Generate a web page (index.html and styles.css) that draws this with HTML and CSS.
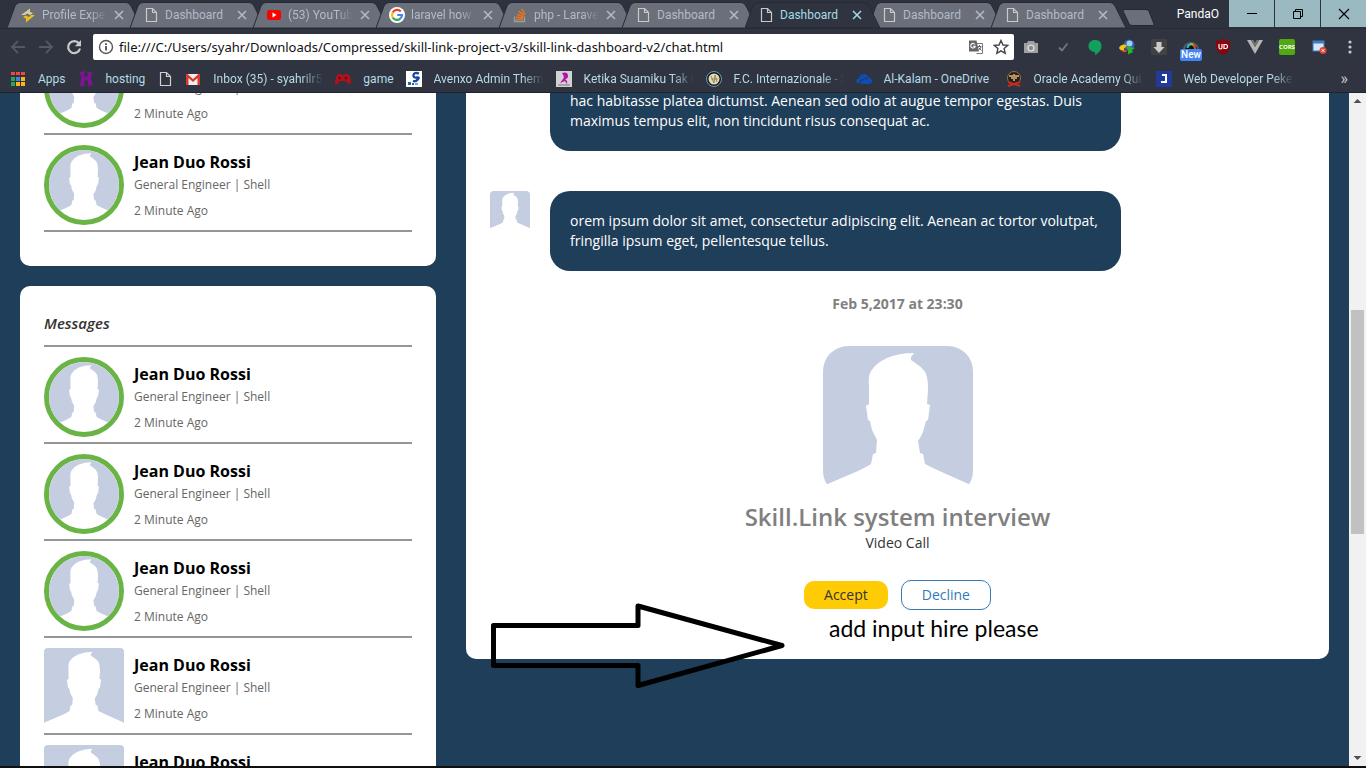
FILE: index.html
```html
<!DOCTYPE html>
<html lang="en">
<head>
<meta charset="utf-8">
<title>Dashboard</title>
<link rel="stylesheet" href="styles.css">
</head>
<body>
<svg class="sprite" aria-hidden="true">
  <symbol id="person" viewBox="0 0 150 150">
    <path fill="#c5cde0" d="M0 0H150V140L112 123L102 118L100 108L97 107L95 95Q98 91 100 86L103 75L105 74L107 59L104 58L105 44Q105 33 103 28Q101 23 95 19L88 14L88 11L91 7Q76 7 64 12Q53 17 48 25Q45 30 46 41V58L43 60L45 74L47 75L49 84Q51 88 54 94L53 107L50 108L48 118Q45 120 35 125L0 140Z"/>
  </symbol>
  <symbol id="page" viewBox="0 0 16 16"><path d="M3.500 1.500H9.500L13.500 5.500V14.500H3.500ZM9.500 1.500V5.500H13.500" fill="none" stroke="currentColor" stroke-width="1.200"/></symbol>
  <symbol id="cross" viewBox="0 0 12 12"><path d="M2 2L10 10M10 2L2 10" fill="none" stroke="currentColor" stroke-width="1.500"/></symbol>
  <symbol id="tab-shape" viewBox="0 0 135 26" preserveAspectRatio="none"><path d="M0 26L8 4Q10 .5 13 .5H119Q122 .5 124 4L135 26Z" fill="currentColor" stroke="#262a34"/></symbol>
</svg>

<header class="browser">
  <div class="titlebar">
    <nav class="tabs" aria-label="Tabs">
      <div class="tab"><svg class="tab-bg"><use href="#tab-shape"/></svg>
        <svg class="icon" viewBox="0 0 16 16"><path d="M1 8L10 1.500V5L13 6L10.500 8L7 6.500L5 8Z" fill="#d8cf9a"/><path d="M15 8L6 15.500V11.500L3 10L5.500 8.500L9 10L11 8Z" fill="#eebd17"/></svg>
        <a href="#" class="tab-title fade">Profile Expe</a><button class="close" aria-label="Close tab"><svg><use href="#cross"/></svg></button></div>
      <div class="tab"><svg class="tab-bg"><use href="#tab-shape"/></svg><svg class="icon"><use href="#page"/></svg><a href="#" class="tab-title">Dashboard</a><button class="close" aria-label="Close tab"><svg><use href="#cross"/></svg></button></div>
      <div class="tab"><svg class="tab-bg"><use href="#tab-shape"/></svg>
        <svg class="icon" viewBox="0 0 16 16"><rect x="1" y="3" width="14" height="10" rx="2.500" fill="#f00"/><path d="M6.500 5.500L10.500 8L6.500 10.500Z" fill="#fff"/></svg>
        <a href="#" class="tab-title fade">(53) YouTub</a><button class="close" aria-label="Close tab"><svg><use href="#cross"/></svg></button></div>
      <div class="tab"><svg class="tab-bg"><use href="#tab-shape"/></svg>
        <svg class="icon" viewBox="0 0 16 16"><circle cx="8" cy="8" r="8" fill="#fff"/><g fill="none" stroke-width="2.200"><path d="M11.800 4.600A5 5 0 0 0 3.700 5.500" stroke="#ea4335"/><path d="M3.700 5.500A5 5 0 0 0 3.700 10.500" stroke="#fbbc05"/><path d="M3.700 10.500A5 5 0 0 0 11.300 11.700" stroke="#34a853"/><path d="M11.300 11.700A5 5 0 0 0 13 8H8.200" stroke="#4285f4"/></g></svg>
        <a href="#" class="tab-title fade">laravel how</a><button class="close" aria-label="Close tab"><svg><use href="#cross"/></svg></button></div>
      <div class="tab"><svg class="tab-bg"><use href="#tab-shape"/></svg>
        <svg class="icon" viewBox="0 0 16 16"><path d="M2.500 9.500V14.500H12.500V9.500" fill="none" stroke="#9a9ea6" stroke-width="1.300"/><path d="M4 12.500H11M4.200 10L11 11.200M5 7.200L11.400 10M6.700 4.200L12 8.600M9.700 1.800L13 7.500" stroke="#e87420" stroke-width="1.500"/></svg>
        <a href="#" class="tab-title fade">php - Larave</a><button class="close" aria-label="Close tab"><svg><use href="#cross"/></svg></button></div>
      <div class="tab"><svg class="tab-bg"><use href="#tab-shape"/></svg><svg class="icon"><use href="#page"/></svg><a href="#" class="tab-title">Dashboard</a><button class="close" aria-label="Close tab"><svg><use href="#cross"/></svg></button></div>
      <div class="tab active"><svg class="tab-bg"><use href="#tab-shape"/></svg><svg class="icon"><use href="#page"/></svg><a href="#" class="tab-title" aria-current="page">Dashboard</a><button class="close" aria-label="Close tab"><svg><use href="#cross"/></svg></button></div>
      <div class="tab"><svg class="tab-bg"><use href="#tab-shape"/></svg><svg class="icon"><use href="#page"/></svg><a href="#" class="tab-title">Dashboard</a><button class="close" aria-label="Close tab"><svg><use href="#cross"/></svg></button></div>
      <div class="tab"><svg class="tab-bg"><use href="#tab-shape"/></svg><svg class="icon"><use href="#page"/></svg><a href="#" class="tab-title">Dashboard</a><button class="close" aria-label="Close tab"><svg><use href="#cross"/></svg></button></div>
      <button class="new-tab" aria-label="New tab"><svg viewBox="0 0 34 17"><path d="M3 .5H24Q26 .5 27 2.500L32 15Q32 16.500 31 16.500H10Q8 16.500 7 14.500L1 2Q1 .5 3 .5Z" fill="#6a6f79" stroke="#232730"/></svg></button>
    </nav>
    <span class="user">PandaO</span>
    <div class="window-buttons">
      <button aria-label="Minimize"><svg viewBox="0 0 12 12"><path d="M1 5.500H11" stroke="#000"/></svg></button>
      <button aria-label="Restore"><svg viewBox="0 0 12 12"><path d="M1.500 3.500H8.500V10.500H1.500ZM3.500 3.500V1.500H10.500V8.500H8.500" fill="none" stroke="#000"/></svg></button>
      <button aria-label="Close"><svg viewBox="0 0 12 12"><path d="M1 1L11 11M11 1L1 11" stroke="#000" stroke-width="1.200"/></svg></button>
    </div>
  </div>

  <div class="toolbar">
    <div class="nav-buttons">
      <button aria-label="Back" class="dim"><svg viewBox="0 0 16 16"><path d="M15 8H2M8 2L2 8L8 14" fill="none" stroke="currentColor" stroke-width="1.800"/></svg></button>
      <button aria-label="Forward" class="dim"><svg viewBox="0 0 16 16"><path d="M1 8H14M8 2L14 8L8 14" fill="none" stroke="currentColor" stroke-width="1.800"/></svg></button>
      <button aria-label="Reload"><svg viewBox="0 0 16 16"><path d="M13 4.500A6 6 0 1 0 14 9.500" fill="none" stroke="currentColor" stroke-width="2.200"/><path d="M15 1V7.200H8.800Z" fill="currentColor"/></svg></button>
    </div>
    <div class="omnibox">
      <svg class="icon" viewBox="0 0 16 16"><circle cx="8" cy="8" r="6.500" fill="none" stroke="#555" stroke-width="1.400"/><path d="M8 7V11.500M8 4.300V5.900" stroke="#444" stroke-width="1.700"/></svg>
      <input type="text" aria-label="Address" value="file:///C:/Users/syahr/Downloads/Compressed/skill-link-project-v3/skill-link-dashboard-v2/chat.html">
      <button aria-label="Translate"><svg viewBox="0 0 16 16"><path d="M7 4.500H14.500V14.500H8.500" fill="#fff" stroke="#777"/><path d="M1 1.500H8.500L11 12.500H1Z" fill="#666"/><path d="M7 5.500A2.300 2.300 0 1 0 7.300 7.200H5" fill="none" stroke="#fff" stroke-width="1.100"/><path d="M9.500 7.500H13.500M11.500 6V7.500M13 8Q12 10.500 10.500 11M10.500 8.500L13.500 11.500" fill="none" stroke="#666"/></svg></button>
      <button aria-label="Bookmark this page"><svg viewBox="0 0 16 16"><path d="M8 1.500L10 6L14.700 6.400L11.100 9.600L12.200 14.300L8 11.800L3.800 14.300L4.900 9.600L1.300 6.400L6 6Z" fill="none" stroke="#444" stroke-width="1.400"/></svg></button>
    </div>
    <div class="extensions">
      <button aria-label="Screenshot"><svg viewBox="0 0 16 16"><path d="M1 4H4L5 2H11L12 4H15V14H1Z" fill="#a0a0a0"/><circle cx="8" cy="9" r="3.600" fill="#ddd"/><circle cx="8" cy="9" r="2.200" fill="#888"/></svg></button>
      <button aria-label="Checker"><svg viewBox="0 0 16 16"><path d="M4 8.500L7 11.500L12.500 4.500" fill="none" stroke="#777" stroke-width="1.800"/></svg></button>
      <button aria-label="Hangouts"><svg viewBox="0 0 16 16"><path d="M8 1C4 1 1.500 3.500 1.500 7S4.500 13 8 13V16C12 14 14.500 11 14.500 7S12 1 8 1Z" fill="#12a05c"/></svg></button>
      <button aria-label="Download manager"><svg viewBox="0 0 16 16"><circle cx="10" cy="6" r="5.500" fill="#2b5fae"/><circle cx="10.500" cy="4.500" r="3" fill="#a6c9ee"/><path d="M0 9Q2 4 8 6L6 9Q4 9 6 12Q1 12 0 9Z" fill="#f2c417"/><path d="M1 10.500Q4 14.500 8 12.500L7 11Q4 12 1 10.500Z" fill="#db4b23"/><path d="M7 7L16 9L13 11L14 13L9 15.500L9 12Z" fill="#2bb32d"/></svg></button>
      <button aria-label="Downloads"><svg viewBox="0 0 16 16"><rect width="16" height="16" rx="1" fill="#424242"/><path d="M5.500 3H10.500V8H13.500L8 14L2.500 8H5.500Z" fill="#ccc"/></svg></button>
      <button aria-label="Speed monitor" class="with-badge"><svg viewBox="0 0 16 16"><path d="M0 11A8 8 0 1 1 16 11Z" fill="#5b5d61"/><path d="M2 11A6 6 0 1 1 14 11Z" fill="#111"/><path d="M4.500 9A4 4 0 0 1 7 5.500" fill="none" stroke="#18c5e0" stroke-width="2"/><path d="M7 5.500A4 4 0 0 1 10.500 6" fill="none" stroke="#8bd320" stroke-width="2"/><path d="M10 6Q12 7 12 10" fill="none" stroke="#e7542a" stroke-width="2"/></svg><span class="badge">New</span></button>
      <button aria-label="Blocker"><svg viewBox="0 0 16 16"><path d="M8 0Q11 2 15 2V8Q14 13 8 16Q2 13 1 8V2Q5 2 8 0Z" fill="#8c0309"/><path d="M4 5V8.500Q4 10 5.500 10T7 8.500V5" fill="none" stroke="#fff" stroke-width="1.200"/><path d="M9 5.600V9.400Q12.500 10 12.500 7.500T9 5.600Z" fill="none" stroke="#fff" stroke-width="1.200"/></svg></button>
      <button aria-label="Vue devtools"><svg viewBox="0 0 16 16"><path d="M0 1H4L8 8L12 1H16L8 15Z" fill="#b5b5b5"/><path d="M4 1H6.500L8 4L9.500 1H12L8 8Z" fill="#737373"/></svg></button>
      <button aria-label="CORS" class="cors">CORS</button>
      <button aria-label="Window closer"><svg viewBox="0 0 16 16"><rect x="2" y="2" width="11" height="10" fill="#d5e6f7" stroke="#3c7dc6"/><path d="M2 2H13V4.500H2Z" fill="#3c7dc6"/><circle cx="12" cy="11.500" r="3.500" fill="#e04532"/><path d="M10.700 10.200L13.300 12.800M13.300 10.200L10.700 12.800" stroke="#fff"/></svg></button>
      <button aria-label="Menu"><svg viewBox="0 0 16 16"><g fill="#c8c8c8"><circle cx="8" cy="3" r="1.600"/><circle cx="8" cy="8" r="1.600"/><circle cx="8" cy="13" r="1.600"/></g></svg></button>
    </div>
  </div>

  <nav class="bookmarks" aria-label="Bookmarks">
    <a href="#"><svg class="icon" viewBox="0 0 16 16"><path d="M1 1h4v3H1zM6 1h4v3H6zM11 1h4v3h-4z" fill="#f04a3e"/><path d="M1 6h4v4H1zM1 11h4v4H1z" fill="#27a65a"/><path d="M6 6h4v4H6z" fill="#3b82ec"/><path d="M6 11h4v4H6zM11 6h4v4h-4zM11 11h4v4h-4z" fill="#f9b51a"/><path d="M5.500 0V16M10.500 0V16M0 5H16M0 10.500H16" stroke="#2d323e"/></svg><span>Apps</span></a>
    <a href="#"><svg class="icon" viewBox="0 0 16 16"><path d="M1 1L7 0L6 6L10 5L9 1L14 1L13 7L15 14L10 15.500L10 9L6 10L7 15L1 15L3 10L3 4Z" fill="#7b1591"/></svg><span>hosting</span></a>
    <a href="#" class="bare" aria-label="Untitled page"><svg class="icon"><use href="#page"/></svg></a>
    <a href="#"><svg class="icon" viewBox="0 0 16 16"><path d="M1 3H15V14H1Z" fill="#eee"/><path d="M1 14V3H2.500L8 8L13.500 3H15V14H12.500V7L8 11L3.500 7V14Z" fill="#d8392e"/></svg><span class="fade">Inbox (35) - syahrilr5</span></a>
    <a href="#"><svg class="icon" viewBox="0 0 16 16"><path d="M3 3H6L7 4H9L10 3H13Q16 6 16 13Q13 14 11 10H5Q3 14 0 13Q0 6 3 3Z" fill="#b3101c"/><path d="M3 7H6M4.500 5.500V8.500M11 5.500V8.500M9.500 7H12.500" stroke="#5b0a10"/></svg><span>game</span></a>
    <a href="#"><svg class="icon" viewBox="0 0 16 16"><rect width="16" height="16" fill="#fff"/><path d="M13 2.500Q8 1 7.500 4T11 6.500T10 10Q8.500 10.500 7 10" fill="none" stroke="#1746a5" stroke-width="2.300"/><path d="M2 11h3v3H2zM6 12h2v2H6z" fill="#2c62ad"/><path d="M9 12h3v2H9z" fill="#7fa7d8"/></svg><span class="fade">Avenxo Admin Them</span></a>
    <a href="#"><svg class="icon" viewBox="0 0 16 16"><rect width="16" height="16" fill="#d2d2d4"/><path d="M6 2Q12 0 12 5Q12 8 9 8Q12 10 11 13L9 10L4 12L7 8Q9 6 6 2Z" fill="#b613a9"/><path d="M2 14H14" stroke="#777"/></svg><span class="fade">Ketika Suamiku Tak C</span></a>
    <a href="#"><svg class="icon" viewBox="0 0 16 16"><circle cx="8" cy="8" r="7.500" fill="#121b27" stroke="#6f9bab"/><circle cx="8" cy="8" r="5.500" fill="#e4d9b9"/><path d="M5 5L8 12L9 4L11 11M5 8H12" fill="none" stroke="#9c8758"/></svg><span class="fade">F.C. Internazionale - S</span></a>
    <a href="#"><svg class="icon" viewBox="0 0 16 16"><path d="M1 12Q-1 8 3 7Q4 3 8 3Q11 3 12 6Q16 7 16 10Q16 13 13 13H5Z" fill="#0f4db5"/><path d="M4 13Q3 9 7 9Q9 6 12 8" fill="none" stroke="#2d323e"/></svg><span class="wide">Al-Kalam - OneDrive</span></a>
    <a href="#"><svg class="icon" viewBox="0 0 16 16"><circle cx="8" cy="7" r="6.500" fill="#25201c" stroke="#967047"/><path d="M3 5H13M8 3V10M5 7H11" stroke="#b58d5f" stroke-width="2"/><path d="M2 11L14 15M14 11L2 15" stroke="#c02b22" stroke-width="2"/></svg><span class="fade">Oracle Academy Qui</span></a>
    <a href="#"><svg class="icon" viewBox="0 0 16 16"><rect width="16" height="16" fill="#233a9d"/><path d="M6 4H10V11H5" fill="none" stroke="#fff" stroke-width="2"/></svg><span class="fade">Web Developer Peke</span></a>
    <button class="more" aria-label="More bookmarks">»</button>
  </nav>
</header>

<div class="viewport">
  <main class="dashboard">
    <div class="sidebar">
      <section class="card" aria-label="Contacts">
        <ul class="people">
          <li><svg class="avatar ring"><use href="#person"/></svg><div class="scrolled"><p>General Engineer | Shell</p><time>2 Minute Ago</time></div></li>
          <li><svg class="avatar ring"><use href="#person"/></svg><div><h3>Jean Duo Rossi</h3><p>General Engineer | Shell</p><time>2 Minute Ago</time></div></li>
        </ul>
      </section>
      <section class="card">
        <h2>Messages</h2>
        <ul class="people">
          <li><svg class="avatar ring"><use href="#person"/></svg><div><h3>Jean Duo Rossi</h3><p>General Engineer | Shell</p><time>2 Minute Ago</time></div></li>
          <li><svg class="avatar ring"><use href="#person"/></svg><div><h3>Jean Duo Rossi</h3><p>General Engineer | Shell</p><time>2 Minute Ago</time></div></li>
          <li><svg class="avatar ring"><use href="#person"/></svg><div><h3>Jean Duo Rossi</h3><p>General Engineer | Shell</p><time>2 Minute Ago</time></div></li>
          <li><svg class="avatar"><use href="#person"/></svg><div><h3>Jean Duo Rossi</h3><p>General Engineer | Shell</p><time>2 Minute Ago</time></div></li>
          <li><svg class="avatar"><use href="#person"/></svg><div><h3>Jean Duo Rossi</h3></div></li>
        </ul>
      </section>
    </div>

    <section class="chat" aria-label="Chat">
      <div class="message first"><div class="bubble">hac habitasse platea dictumst. Aenean sed odio at augue tempor egestas. Duis maximus tempus elit, non tincidunt risus consequat ac.</div></div>
      <div class="message"><svg class="avatar small"><use href="#person"/></svg><div class="bubble">orem ipsum dolor sit amet, consectetur adipiscing elit. Aenean ac tortor volutpat, fringilla ipsum eget, pellentesque tellus.</div></div>
      <div class="interview">
        <time>Feb 5,2017 at 23:30</time>
        <svg class="avatar large"><use href="#person"/></svg>
        <h1>Skill.Link system interview</h1>
        <p>Video Call</p>
        <div class="actions"><button class="accept">Accept</button><button class="decline">Decline</button></div>
      </div>
      <svg class="arrow" viewBox="0 0 296 86"><path d="M3.500 22.500H148V3L292 42.500L148 82.500V62.500H3.500Z" fill="none" stroke="#000" stroke-width="5" stroke-linejoin="round"/></svg>
      <p class="note">add input hire please</p>
    </section>
  </main>
  <div class="scrollbar" aria-hidden="true">
    <svg viewBox="0 0 17 17"><path d="M4.500 10L8.500 6L12.500 10Z" fill="#505050"/></svg>
    <span class="thumb"></span>
    <svg class="down" viewBox="0 0 17 17"><path d="M4.500 7L8.500 11L12.500 7Z" fill="#505050"/></svg>
  </div>
</div>
</body>
</html>
```
FILE: styles.css
```css
* { box-sizing: border-box; }

body {
  margin: 0;
  height: 100vh;
  display: flex;
  flex-direction: column;
  overflow: hidden;
  border-bottom: 2px solid #101010;
  background: #1f3e5a;
  font: 14px/20px "Open Sans", "Noto Sans", sans-serif;
  color: #333;
}

h1, h2, h3, p, ul { margin: 0; padding: 0; }
ul { list-style: none; }
a { color: inherit; text-decoration: none; }
button { border: 0; padding: 0; background: none; font: inherit; color: inherit; }
svg { display: block; flex: none; }
.sprite { position: absolute; width: 0; height: 0; }
.icon { width: 16px; height: 16px; }

/* Browser frame */
.browser {
  flex: none;
  background: #2f3440;
  border-bottom: 1px solid #20242c;
  font: 12px/16px Roboto, "Open Sans", sans-serif;
  color: #b5dbe6;
}

.titlebar {
  display: flex;
  align-items: flex-start;
  height: 29px;
  background: #2d323e;
  border-bottom: 1px solid #272b35;
}

.tabs { flex: 1; min-width: 0; display: flex; padding: 2px 0 0 7px; }

.tab {
  position: relative;
  flex: 0 1 135px;
  min-width: 0;
  height: 26px;
  margin-right: -12px;
  padding: 0 17px 0 13px;
  display: flex;
  align-items: center;
  gap: 6px;
  color: #b3bacb;
}

.tab-bg { position: absolute; inset: 0; width: 100%; height: 100%; color: #6a6f79; }
.tab > .icon, .tab-title, .close { position: relative; }
.tab > .icon { color: #c9c9c9; }
.tab.active { color: #a3dce4; z-index: 1; }
.tab.active .tab-bg { color: #2f3440; }
.tab-title { flex: 1; min-width: 0; overflow: hidden; white-space: nowrap; }
.tab-title.fade { mask-image: linear-gradient(to right, #000 75%, transparent); }
.close svg { width: 12px; height: 12px; }
.new-tab { margin: 5px 0 0 8px; }
.new-tab svg { width: 34px; height: 17px; }

.user { padding: 6px 10px 0 0; color: #fff; }
.window-buttons { display: flex; gap: 1px; }
.window-buttons button { width: 45px; height: 27px; display: grid; place-items: center; background: #9ab9c1; }
.window-buttons svg { width: 12px; height: 12px; }

.toolbar { display: flex; align-items: center; height: 36px; padding: 0 2px 0 10px; }
.nav-buttons { display: flex; gap: 12px; padding-right: 11px; color: #c9c9c9; }
.nav-buttons svg { width: 16px; height: 16px; }
.nav-buttons .dim { color: #555963; }

.omnibox {
  flex: 1;
  display: flex;
  align-items: center;
  gap: 9px;
  height: 26px;
  padding: 0 5px;
  background: #fff;
  border-radius: 2px;
}

.omnibox input {
  flex: 1;
  min-width: 0;
  border: 0;
  padding: 0;
  margin-left: -4px;
  background: none;
  font: 13px/20px "Noto Sans", sans-serif;
  color: #111;
}

.omnibox button svg, .extensions svg { width: 16px; height: 16px; }

.extensions { display: flex; align-items: center; padding-left: 1px; }
.extensions button { width: 32px; height: 26px; display: grid; place-items: center; }
.extensions button:last-child { width: 29px; }
.with-badge { position: relative; }

.badge {
  position: absolute;
  left: 5px;
  top: 15px;
  width: 22px;
  border-radius: 2px;
  background: #4285f4;
  color: #fff;
  font-size: 10px;
  font-weight: 500;
  line-height: 12px;
  text-align: center;
}

.extensions .cors {
  width: 16px;
  height: 16px;
  margin: 0 8px;
  border-radius: 2px;
  background: #50a910;
  color: #fff;
  font: 700 6px/16px "Open Sans", sans-serif;
}

.bookmarks {
  display: flex;
  align-items: center;
  gap: 12px;
  height: 27px;
  padding: 0 18px 0 10px;
}

.bookmarks a { display: flex; flex: none; align-items: center; gap: 12px; }
.bookmarks span { white-space: nowrap; }
.bookmarks .fade, .bookmarks .wide { width: 110px; overflow: hidden; }
.bookmarks .fade { mask-image: linear-gradient(to right, #000 88px, transparent 110px); }
.bookmarks .bare { color: #d0d0d0; }
.more { margin-left: auto; font-size: 16px; color: #ccc; }

/* Page */
.viewport { flex: 1; min-height: 0; display: flex; overflow: hidden; }

.dashboard {
  flex: 1;
  display: grid;
  grid-template-columns: 416fr 863fr;
  align-items: start;
  gap: 30px;
  margin-top: -55px;
  padding: 0 20px;
}

.sidebar { display: grid; gap: 20px; }
.card { padding: 0 24px 34px; background: #fff; border-radius: 10px; }

.card h2 {
  padding: 27px 0 12px;
  border-bottom: 2px solid #969696;
  font-size: 15px;
  font-style: italic;
  font-weight: 600;
  line-height: 20px;
}

.people li {
  display: flex;
  gap: 10px;
  padding: 10px 0 5px;
  border-bottom: 2px solid #969696;
  font-size: 12px;
  line-height: 18px;
  color: #666;
}

.people li > div { padding-top: 6px; }
.people li > .scrolled { padding-top: 28px; }
.people h3 { font-size: 16px; font-weight: 700; line-height: 22px; color: #000; }
.people p { margin: 3px 0 8px; }
.people time { display: block; }

.avatar { width: 80px; height: 80px; border-radius: 4px; }
.avatar.ring { border: 5px solid #6ab445; border-radius: 50%; }
.avatar.small { width: 40px; height: 40px; }
.avatar.large { width: 150px; height: 150px; border-radius: 25px; }

.chat { position: relative; padding: 0 24px 49px; background: #fff; border-radius: 10px; }
.message { display: flex; gap: 20px; margin-bottom: 40px; }
.message.first { padding-left: 60px; }
.message.first .bubble { padding-top: 53px; }
.bubble { flex: 0 1 571px; padding: 20px; border-radius: 20px; background: #1f3e5a; color: #fff; }

.interview { display: flex; flex-direction: column; align-items: center; margin-top: -17px; }
.interview time { margin-bottom: 32px; font-weight: 700; color: #808080; }
.interview h1 { margin-top: 5px; font-size: 24px; font-weight: 600; line-height: 32px; color: #808080; }

.actions { display: flex; align-items: center; gap: 13px; margin-top: 27px; }
.actions button { padding: 4px 20px; border-radius: 10px; }
.accept { background: #ffcb05; }
.actions .decline { border: 1px solid #337ab7; color: #337ab7; }

.arrow { position: absolute; left: 24px; bottom: -30px; width: 296px; height: 86px; }
.note { position: absolute; left: 363px; bottom: 17px; font: 23px/28px Lato, sans-serif; color: #000; }

.scrollbar {
  width: 17px;
  display: grid;
  grid-template-rows: 17px 200fr 224fr 215fr 17px;
  background: #f1f1f1;
}

.scrollbar svg { width: 17px; height: 17px; }
.thumb { grid-row: 3; margin: 0 2px; background: #c1c1c1; }
.down { grid-row: 5; }
```
